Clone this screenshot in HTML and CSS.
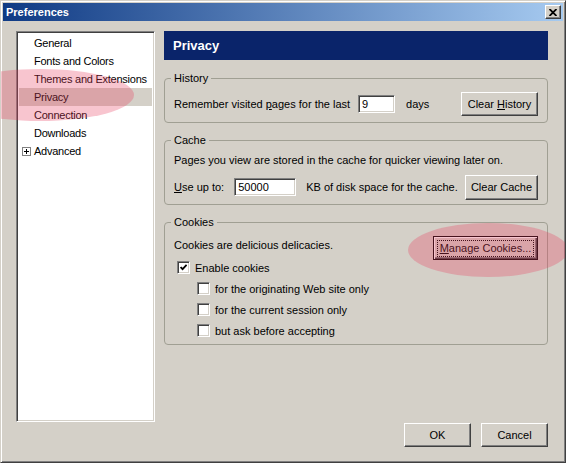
FILE: index.html
```html
<!DOCTYPE html>
<html>
<head>
<meta charset="utf-8">
<title>Preferences</title>
<link rel="stylesheet" href="styles.css">
</head>
<body>
<div class="window">
  <div class="titlebar">
    <span class="title">Preferences</span>
    <span class="close-btn">
      <svg width="8" height="7" viewBox="0 0 8 7"><path d="M0.5 0 L7.5 7 M7.5 0 L0.5 7" stroke="#000" stroke-width="1.8" fill="none"/></svg>
    </span>
  </div>
  <div class="body">
    <div class="tree">
      <div class="item"><span class="twisty"></span><span>General</span></div>
      <div class="item"><span class="twisty"></span><span>Fonts and Colors</span></div>
      <div class="item"><span class="twisty"></span><span>Themes and Extensions</span></div>
      <div class="item selected"><span class="twisty"></span><span>Privacy</span></div>
      <div class="item"><span class="twisty"></span><span>Connection</span></div>
      <div class="item"><span class="twisty"></span><span>Downloads</span></div>
      <div class="item"><span class="twisty"><svg class="expander" width="9" height="9" viewBox="0 0 9 9"><rect x="0.5" y="0.5" width="8" height="8" fill="#fff" stroke="#808080"/><path d="M2 4.5 H7 M4.5 2 V7" stroke="#000" stroke-width="1"/></svg></span><span>Advanced</span></div>
    </div>
    <div class="main">
      <div class="header">Privacy</div>

      <fieldset class="group group-history">
        <legend>History</legend>
        <div class="row">
          <span>Remember visited <u>p</u>ages for the last</span>
          <span class="field field-days">9</span>
          <span class="unit-days">days</span>
          <span class="btn btn-history"><span>Clear <u>H</u>istory</span></span>
        </div>
      </fieldset>

      <fieldset class="group group-cache">
        <legend>Cache</legend>
        <div class="line">Pages you view are stored in the cache for quicker viewing later on.</div>
        <div class="row row-cache">
          <span><u>U</u>se up to:</span>
          <span class="field field-cache">50000</span>
          <span class="unit-kb">KB of disk space for the cache.</span>
          <span class="btn btn-cache"><span>Clear Cache</span></span>
        </div>
      </fieldset>

      <fieldset class="group group-cookies">
        <legend>Cookies</legend>
        <div class="row row-cookies">
          <span class="cookie-text">Cookies are delicious delicacies.</span>
          <span class="btn btn-default btn-manage"><span class="focus"><u>M</u>anage Cookies...</span></span>
        </div>
        <div class="check">
          <span class="box"><svg width="7" height="7" viewBox="0 0 7 7"><path d="M0.6 3 L2.6 5.2 L6.6 0.9" stroke="#000" stroke-width="1.8" fill="none"/></svg></span>
          <span>Enable cookies</span>
        </div>
        <div class="check sub">
          <span class="box"></span>
          <span>for the originating Web site only</span>
        </div>
        <div class="check sub">
          <span class="box"></span>
          <span>for the current session only</span>
        </div>
        <div class="check sub">
          <span class="box"></span>
          <span>but ask before accepting</span>
        </div>
      </fieldset>

      <div class="footer">
        <span class="btn btn-footer"><span>OK</span></span>
        <span class="btn btn-footer"><span>Cancel</span></span>
      </div>
    </div>
  </div>
  <div class="mark mark-left"></div>
  <div class="mark mark-right"></div>
</div>
</body>
</html>
```

FILE: styles.css
```css
html, body {
  margin: 0;
  padding: 0;
  background: #d4d0c8;
}

body {
  font-family: "Liberation Sans", Arial, sans-serif;
  font-size: 11px;
  color: #000;
}

.window {
  position: relative;
  width: 566px;
  height: 463px;
  box-sizing: border-box;
  background: #d4d0c8;
  border: 1px solid;
  border-color: #d4d0c8 #404040 #404040 #d4d0c8;
  box-shadow: inset 1px 1px 0 #fff, inset -1px -1px 0 #808080;
  padding: 2px;
  overflow: hidden;
  display: flex;
  flex-direction: column;
}

.titlebar {
  height: 18px;
  flex: none;
  background: linear-gradient(to right, #0f3a84, #a6caf0);
  display: flex;
  align-items: center;
  padding: 0 2px 0 2px;
}

.title {
  color: #fff;
  font-weight: bold;
  font-size: 11px;
  flex: 1;
  padding-left: 1px;
}

.close-btn {
  width: 16px;
  height: 14px;
  box-sizing: border-box;
  background: #d4d0c8;
  border: 1px solid;
  border-color: #fff #404040 #404040 #fff;
  box-shadow: inset -1px -1px 0 #808080;
  display: flex;
  align-items: center;
  justify-content: center;
}

.close-btn svg {
  display: block;
  margin-left: -1px;
}

.body {
  flex: 1;
  display: flex;
  gap: 9px;
  padding: 10px 15px 13px 13px;
  min-height: 0;
}

.tree {
  width: 139px;
  height: 391px;
  flex: none;
  box-sizing: border-box;
  background: #fff;
  border: 1px solid;
  border-color: #808080 #fff #fff #808080;
  box-shadow: inset 1px 1px 0 #404040, inset -1px -1px 0 #d4d0c8;
  padding: 2px 2px;
}

.item {
  height: 18px;
  line-height: 18px;
  display: flex;
  align-items: center;
  white-space: nowrap;
  letter-spacing: -0.25px;
}

.item.selected {
  background: #d4d0c8;
}

.twisty {
  width: 15px;
  flex: none;
  display: flex;
  align-items: center;
}

.expander {
  display: block;
  margin-left: 3px;
}

.main {
  flex: 1;
  display: flex;
  flex-direction: column;
  min-width: 0;
}

.header {
  height: 29px;
  flex: none;
  background: #0a246a;
  color: #fff;
  font-weight: bold;
  font-size: 13px;
  display: flex;
  align-items: center;
  padding-left: 9px;
}

.group {
  margin: 11px 0 0 0;
  padding: 7px 9px 6px 9px;
  border: 1px solid #a09f93;
  border-radius: 4px;
  min-width: 0;
}

.group legend {
  padding: 0 3px;
  margin-left: -3px;
  line-height: 14px;
}

.group-cache {
  margin-top: 10px;
  padding-top: 6px;
  padding-bottom: 5px;
}

.group-cookies {
  margin-top: 10px;
  padding-top: 7px;
  padding-bottom: 3px;
}

.row {
  display: flex;
  align-items: center;
  height: 24px;
  white-space: nowrap;
}

.line {
  line-height: 14px;
  white-space: nowrap;
}

.row-cache {
  margin-top: 8px;
}

.field {
  box-sizing: border-box;
  background: #fff;
  border: 1px solid;
  border-color: #808080 #fff #fff #808080;
  box-shadow: inset 1px 1px 0 #404040, inset -1px -1px 0 #d4d0c8;
  padding-left: 3px;
  display: flex;
  align-items: center;
}

.field-days {
  width: 37px;
  height: 18px;
  margin-left: 8px;
}

.unit-days {
  margin-left: 11px;
}

.field-cache {
  width: 62px;
  height: 18px;
  margin-left: 10px;
}

.unit-kb {
  margin-left: 10px;
}

.btn {
  box-sizing: border-box;
  background: #d4d0c8;
  border: 1px solid;
  border-color: #fff #404040 #404040 #fff;
  box-shadow: inset -1px -1px 0 #808080;
  display: flex;
  align-items: center;
  justify-content: center;
  white-space: nowrap;
}

.btn-history {
  width: 77px;
  height: 24px;
  margin-left: auto;
}

.btn-cache {
  width: 73px;
  height: 25px;
  margin-left: auto;
}

.row-cookies {
  height: 21px;
  align-items: flex-start;
}

.cookie-text {
  margin-top: 3px;
}

.btn-manage {
  width: 105px;
  height: 24px;
  margin-left: auto;
  flex: none;
}

.btn-default {
  border: 1px solid #000;
  box-shadow: inset 1px 1px 0 #fff, inset -1px -1px 0 #404040, inset -2px -2px 0 #808080;
}

.focus {
  border: 1px dotted #000;
  padding: 1px 2px;
  line-height: 13px;
}

.check {
  height: 21px;
  display: flex;
  align-items: center;
  white-space: nowrap;
  padding-left: 3px;
}

.check.sub {
  padding-left: 23px;
}

.box {
  width: 13px;
  height: 13px;
  box-sizing: border-box;
  flex: none;
  background: #fff;
  border: 1px solid;
  border-color: #808080 #fff #fff #808080;
  box-shadow: inset 1px 1px 0 #404040, inset -1px -1px 0 #d4d0c8;
  display: flex;
  align-items: center;
  justify-content: center;
  margin-right: 5px;
}

.box svg {
  display: block;
}

.footer {
  margin-top: auto;
  display: flex;
  justify-content: flex-end;
  gap: 10px;
  padding-right: 0;
}

.btn-footer {
  width: 67px;
  height: 24px;
}

.mark {
  position: absolute;
  border-radius: 50%;
  background: rgba(232, 64, 96, 0.3);
  pointer-events: none;
}

.mark-left {
  left: -55px;
  top: 68px;
  width: 188px;
  height: 52px;
}

.mark-right {
  left: 407px;
  top: 222px;
  width: 160px;
  height: 54px;
}
```
